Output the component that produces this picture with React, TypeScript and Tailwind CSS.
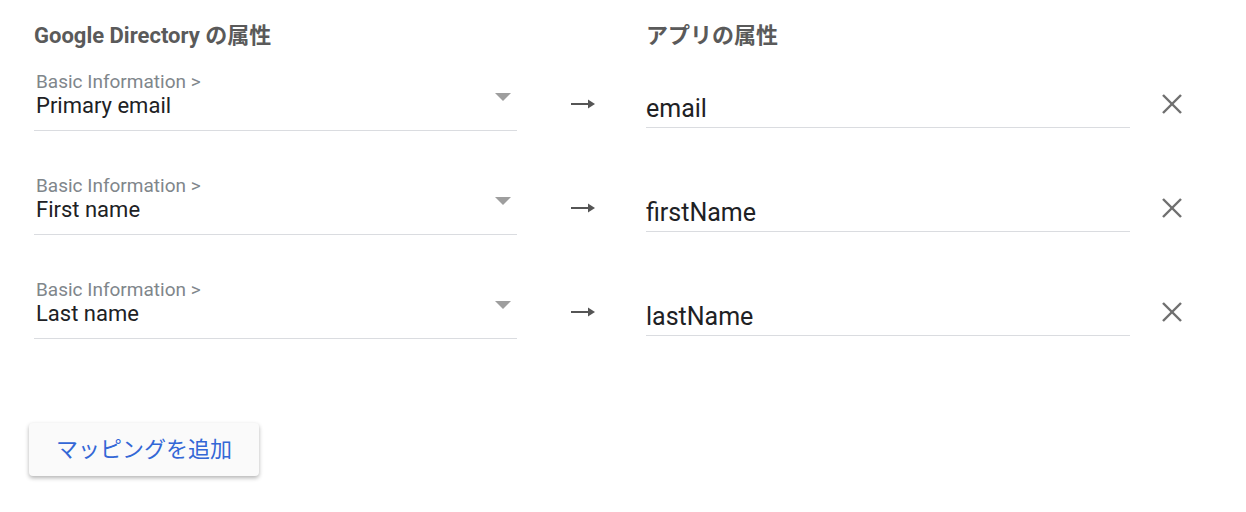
const rows = [
  { src: "Primary email", dest: "email" },
  { src: "First name", dest: "firstName" },
  { src: "Last name", dest: "lastName" },
];

function Arrow() {
  return (
    <svg width="26" height="12" viewBox="0 0 26 12" className="text-[#555]">
      <line x1="1" y1="6" x2="19" y2="6" stroke="currentColor" strokeWidth="2" />
      <polygon points="18,1.5 25,6 18,10.5" fill="currentColor" />
    </svg>
  );
}

function Close() {
  return (
    <svg width="22" height="22" viewBox="0 0 22 22" className="text-[#6f6f6f]">
      <line x1="2" y1="2" x2="20" y2="20" stroke="currentColor" strokeWidth="2.4" />
      <line x1="20" y1="2" x2="2" y2="20" stroke="currentColor" strokeWidth="2.4" />
    </svg>
  );
}

function MappingRow({ src, dest }: { src: string; dest: string }) {
  return (
    <div className="grid grid-cols-[483px_129px_484px_32px_22px] items-start">
      <div className="flex items-start border-b border-[#dadce0] pt-[1px] pb-[12px]">
        <div className="flex-1 pl-[2px]">
          <div className="text-[19px] leading-[24px] text-[#80868b]">Basic Information &gt;</div>
          <div className="text-[22px] leading-[24px] text-[#202124]">{src}</div>
        </div>
        <svg width="16" height="8" viewBox="0 0 16 8" className="mt-[23px] mr-[6px] text-[#9e9e9e]">
          <polygon points="0,0 16,0 8,8" fill="currentColor" />
        </svg>
      </div>
      <div className="mt-[29px] pl-[53px]">
        <Arrow />
      </div>
      <div className="mt-[27px] border-b border-[#dadce0] pb-[5px] text-[25px] leading-[26px] text-[#202124]">
        {dest}
      </div>
      <div />
      <div className="mt-[24px] -ml-[1px]">
        <Close />
      </div>
    </div>
  );
}

export default function App() {
  return (
    <div className="min-h-[512px] bg-white pl-[34px] pt-[24px] font-['Roboto','Noto_Sans_CJK_JP',sans-serif]">
      <div className="grid grid-cols-[612px_484px] text-[22px] font-bold leading-[24px] text-[#5a5a5a]">
        <div>Google Directory の属性</div>
        <div>アプリの属性</div>
      </div>
      <div className="mt-[21px] flex flex-col gap-[42px]">
        {rows.map((r) => (
          <MappingRow key={r.dest} src={r.src} dest={r.dest} />
        ))}
      </div>
      <button className="mt-[84px] -ml-[5px] h-[53px] w-[230px] rounded-[4px] bg-[#fafafa] text-[22px] text-[#3367d6] shadow-[0_2px_4px_rgba(0,0,0,0.3)]">
        マッピングを追加
      </button>
    </div>
  );
}
